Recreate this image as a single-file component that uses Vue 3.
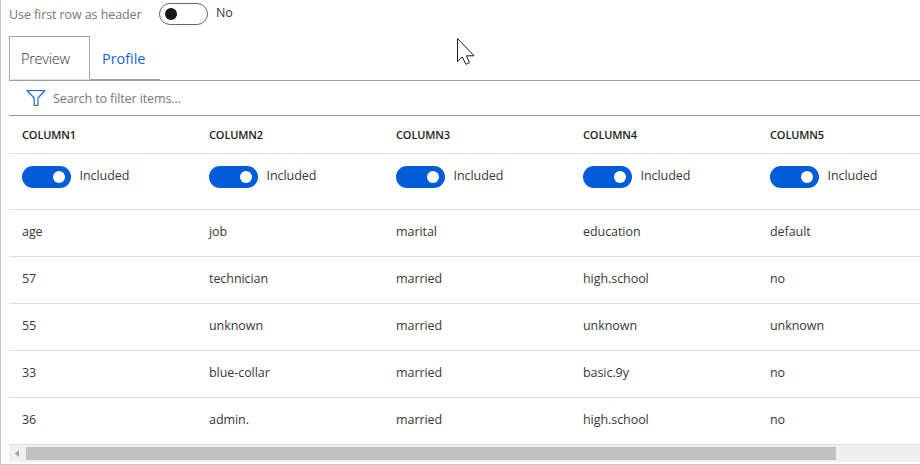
<script setup>
const columns = [
  { name: 'COLUMN1', cells: ['age', '57', '55', '33', '36'] },
  { name: 'COLUMN2', cells: ['job', 'technician', 'unknown', 'blue-collar', 'admin.'] },
  { name: 'COLUMN3', cells: ['marital', 'married', 'married', 'married', 'married'] },
  { name: 'COLUMN4', cells: ['education', 'high.school', 'unknown', 'basic.9y', 'high.school'] },
  { name: 'COLUMN5', cells: ['default', 'no', 'unknown', 'no', 'no'] },
]
const rows = columns[0].cells.map((_, i) => columns.map((c) => c.cells[i]))
</script>

<template>
  <div class="panel">
    <div class="option">
      <span class="option-label">Use first row as header</span>
      <span class="toggle off"><i></i></span>
      <span class="option-value">No</span>
    </div>
    <div class="tabs">
      <div class="tab active"><span>Preview</span></div>
      <div class="tab link"><span>Profile</span></div>
    </div>
    <div class="search">
      <svg width="20" height="18" viewBox="0 0 20 18" fill="none" stroke="#1b66dc" stroke-width="1.15" stroke-linejoin="round">
        <path d="M1 1.5H19L12 9V16.5H8.2V9Z" />
      </svg>
      <span>Search to filter items...</span>
    </div>
    <div class="row head">
      <div v-for="c in columns" :key="c.name" class="cell"><span>{{ c.name }}</span></div>
    </div>
    <div class="row toggles">
      <div v-for="c in columns" :key="c.name" class="cell">
        <span class="toggle on"><i></i></span><span class="included">Included</span>
      </div>
    </div>
    <div v-for="(row, r) in rows" :key="r" class="row data">
      <div v-for="(v, i) in row" :key="i" class="cell"><span>{{ v }}</span></div>
    </div>
    <div class="scrollbar">
      <svg width="17" height="17" viewBox="0 0 17 17"><path d="M10 5V12L6 8.5Z" fill="#a0a0a0" /></svg>
      <div class="thumb"></div>
    </div>
    <svg class="pointer" width="20" height="30" viewBox="0 0 20 30">
      <path d="M2.5 1.5V24.5L7.2 20L11 27.3L14.5 25.7L11.5 18.8H19Z" fill="#fff" stroke="#1b1a28" stroke-width="1" />
    </svg>
  </div>
</template>

<style>
body { margin: 0; background: #fff; overflow: hidden; }
</style>

<style scoped>
.panel {
  box-sizing: border-box;
  width: 920px;
  height: 465px;
  padding-left: 8px;
  border-left: 1px solid #c8c8c8;
  border-bottom: 1px solid #c8c8c8;
  overflow: hidden;
  position: relative;
  font-family: "Open Sans", "Noto Sans", sans-serif;
  font-size: 12.5px;
  letter-spacing: -0.06px;
  line-height: 18px;
  color: #383838;
  white-space: nowrap;
}
.option { display: flex; height: 36px; align-items: flex-start; }
.option-label { width: 150px; padding-top: 6px; color: #777; letter-spacing: -0.09px; }
.option-value { padding: 4px 0 0 8px; }
.toggle {
  box-sizing: border-box;
  display: flex;
  flex: none;
  align-items: center;
  width: 49px;
  height: 22px;
  border-radius: 11px;
}
.toggle i { width: 12px; height: 12px; border-radius: 50%; }
.off { margin-top: 3px; border: 1px solid #666; padding-left: 5px; }
.off i { background: #161616; }
.on { background: #015cda; justify-content: flex-end; padding-right: 6px; }
.on i { background: #fff; }
.tabs { display: flex; height: 44px; border-bottom: 1px solid #a0a0a0; font-size: 14.5px; }
.tab { box-sizing: border-box; height: 44px; padding-top: 13px; }
.active { width: 81px; padding-left: 11px; border: 1px solid #a3a3a3; border-bottom-color: #dde1e8; color: #333; font-weight: 300; letter-spacing: -0.25px; }
.link { width: 70px; padding: 14px 0 0 12px; border-bottom: 1px solid #a0a0a0; color: #1766db; letter-spacing: -0.05px; }
.search {
  display: flex;
  align-items: center;
  height: 34px;
  padding-left: 17px;
  gap: 7px;
  border-bottom: 1px solid #999;
  color: #777;
}
.search span { padding-top: 2px; letter-spacing: -0.1px; }
.row { display: grid; grid-template-columns: repeat(5, 187px); border-bottom: 1px solid #dadee4; }
.cell { display: flex; padding-left: 13px; }
.head { height: 37px; font-size: 11px; font-weight: 600; color: #1c1c1c; letter-spacing: -0.12px; }
.head .cell { padding-top: 10px; }
.toggles { height: 55px; }
.toggles .cell { padding-top: 12px; }
.included { margin: 1px 0 0 8.5px; }
.data { height: 46px; }
.data .cell { padding-top: 13px; }
.scrollbar { display: flex; height: 17px; background: #f0f0f0; }
.thumb { width: 810px; height: 13px; margin-top: 2px; background: #c1c1c1; }
.pointer { position: absolute; left: 454px; top: 37px; }
</style>
